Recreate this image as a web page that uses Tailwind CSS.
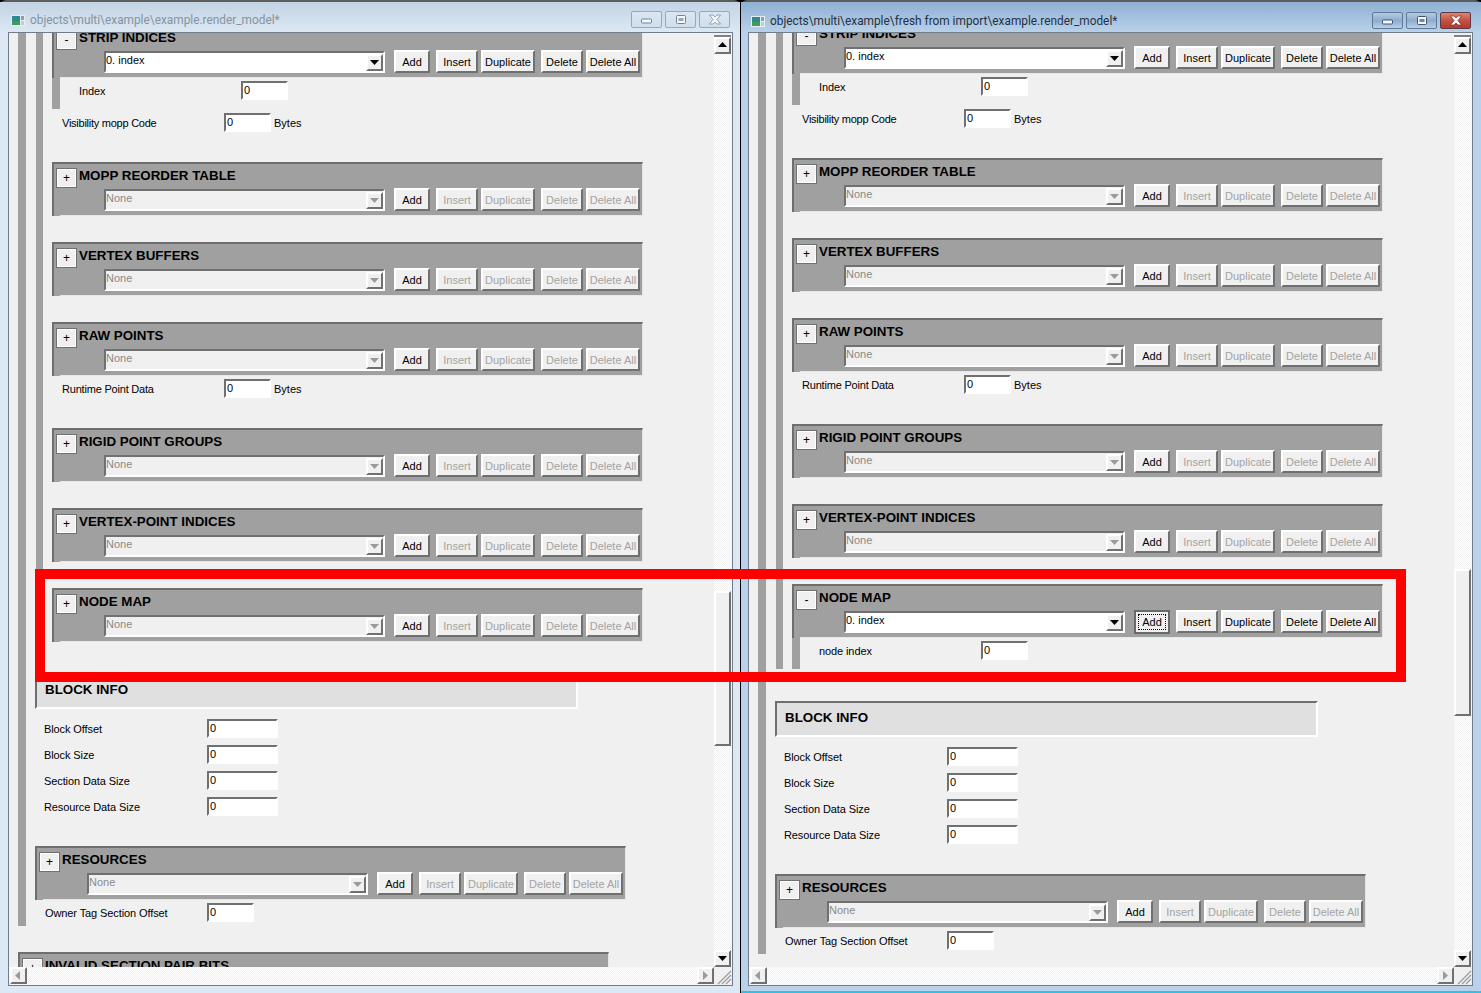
<!DOCTYPE html>
<html lang="en">
<head>
  <meta charset="UTF-8" />
  <title>render_model</title>
  <script src="https://cdn.jsdelivr.net/npm/@tailwindcss/browser@4"></script>
</head>
<body class="bg-black">
<div class="relative w-[1481px] h-[993px] overflow-hidden bg-black font-['Liberation_Sans',Arial,sans-serif] text-[11px] text-black">
  <div id="win-left" class="absolute left-0 top-0 w-[740px] h-[993px] flex flex-col rounded-t-[6px] border-t-2 border-[#5c5c5c] bg-[#dce8f3] pl-[8px] pr-[7px] pb-[7px]"></div>
  <div id="win-right" class="absolute left-[741px] top-0 w-[740px] h-[993px] flex flex-col rounded-t-[6px] border-t-2 border-b-2 border-t-[#5c5c5c] border-b-[#2cc3e6] bg-[#b9d1ea] pl-[7px] pr-[8px] pb-[5px]"></div>
  <div class="absolute left-[35px] top-[569px] w-[1371px] h-[113px] border-[10px] border-[#ff0000]"></div>
</div>

<script>
const raised = "border-2 border-t-white border-l-white border-b-[#707070] border-r-[#707070] bg-[#f0f0f0]";
const sunken = "border-2 border-t-[#707070] border-l-[#707070] border-b-white border-r-white";
const dither = "bg-[repeating-conic-gradient(#f0f0f0_0_25%,#ffffff_0_50%)] bg-size-[2px_2px]";

function tri(dir, color) {
  const pts = { up: "0,6 9,6 4.5,1", down: "0,2 9,2 4.5,7", left: "6,0 6,9 1,4.5", right: "2,0 2,9 7,4.5" };
  return `<svg width="9" height="9" viewBox="0 0 9 9"><polygon points="${pts[dir]}" fill="${color}"/></svg>`;
}

function btn(label, width, on, focus) {
  const color = on ? "text-black" : "text-[#a3a3a3]";
  if (focus) {
    return `<div class="${width} h-[24px] border-2 border-[#6a6a6a] bg-[#f0f0f0] p-[2px]"><div class="h-full border border-dotted border-black flex items-center justify-center">${label}</div></div>`;
  }
  return `<div class="${width} h-[23px] pt-px ${raised} ${color} flex items-center justify-center whitespace-nowrap">${label}</div>`;
}

function combo(text, on) {
  const look = on ? "bg-white text-black" : "bg-[#f0f0f0] text-[#8a8a8a]";
  return `<div class="w-[281px] h-[22px] mt-[1px] ml-[50px] ${sunken} ${look} flex justify-between">
    <span class="leading-[14px]">${text}</span>
    <div class="w-[17px] h-[17px] mt-px ${raised} flex items-center justify-center">${tri("down", on ? "#000000" : "#9a9a9a")}</div>
  </div>`;
}

// one collapsible block header: 591x54
function block(title, open, focus, margin) {
  const item = open ? "0. index" : "None";
  return `<div class="${margin || ""} w-[591px] h-[54px] flex flex-col border-t-2 border-l-2 border-r border-t-[#6e6e6e] border-l-[#6e6e6e] border-r-[#e6e6e6] bg-[#a0a0a0]">
    <div class="flex h-[24px] shrink-0">
      <div class="ml-[2px] mt-[4px] w-[21px] h-[20px] border border-[#707070] bg-[#f0f0f0] shadow-[inset_0_0_0_1px_white] flex items-center justify-center text-[12px] leading-none">${open ? "-" : "+"}</div>
      <span class="ml-[2px] text-[13.35px] font-bold leading-[24px] whitespace-nowrap">${title}</span>
    </div>
    <div class="flex h-[24px] shrink-0">
      ${combo(item, open)}
      <div class="flex ml-[9px]">
        ${btn("Add", "w-[36px]", true, focus)}
        <div class="w-[6px]"></div>${btn("Insert", "w-[42px]", open)}
        <div class="w-[3px]"></div>${btn("Duplicate", "w-[54px]", open)}
        <div class="w-[6px]"></div>${btn("Delete", "w-[42px]", open)}
        <div class="w-[3px]"></div>${btn("Delete All", "w-[54px]", open)}
      </div>
    </div>
    <div class="mt-auto ml-[6px] h-px bg-[#e8e8e8]"></div>
  </div>`;
}

function row(label, margin, labelWidth, inputWidth, unit, spacing) {
  return `<div class="flex h-[19px] items-center ${margin}">
    <span class="${labelWidth} ${spacing || "tracking-[-0.1px]"} pt-px shrink-0 whitespace-nowrap">${label}</span>
    <div class="${inputWidth} h-[19px] ${sunken} bg-white pl-px leading-[15px]">0</div>
    ${unit ? `<span class="ml-[3px] pt-px">${unit}</span>` : ""}
  </div>`;
}

// grey bar + one field under an opened block
function opened(label) {
  return `<div class="h-[31px] pt-[3px] border-l-8 border-[#a0a0a0]">${row(label, "ml-[19px]", "w-[162px]", "w-[47px]")}</div>`;
}

function vscroll(thumbGap, thumbHeight) {
  return `<div class="flex flex-col w-[18px] ${dither}">
    <div class="h-[4px] border-b-2 border-[#808080] bg-[#f0f0f0] mr-px"></div>
    <div class="h-[17px] w-[17px] ${raised} flex items-center justify-center">${tri("up", "#000000")}</div>
    <div class="${thumbGap}"></div>
    <div class="${thumbHeight} w-[17px] ${raised}"></div>
    <div class="flex-1"></div>
    <div class="h-[17px] w-[17px] ${raised} flex items-center justify-center">${tri("down", "#000000")}</div>
  </div>`;
}

function hscroll() {
  return `<div class="flex h-[18px] ${dither} pl-px">
    <div class="h-[17px] w-[17px] ${raised} flex items-center justify-center">${tri("left", "#9a9a9a")}</div>
    <div class="flex-1"></div>
    <div class="h-[17px] w-[17px] ${raised} flex items-center justify-center">${tri("right", "#9a9a9a")}</div>
  </div>`;
}

function grip() {
  return `<div class="h-[18px] w-[18px] bg-[#f0f0f0]"><svg width="18" height="18" viewBox="0 0 18 18"><path d="M4 17 17 4M8 17 17 8M12 17 17 12" stroke="#9a9a9a" stroke-width="1.2" fill="none"/></svg></div>`;
}

function captionButtons(active) {
  const base = active
    ? "border border-[#5f7896] bg-gradient-to-b from-[#b4cbe3] via-[#8eaccd] to-[#b6d1ec]"
    : "border border-[#93a9bf] bg-gradient-to-b from-[#dbe6f1] to-[#cfdeed]";
  const close = active
    ? "border border-[#5e3a48] bg-gradient-to-b from-[#dc8674] via-[#c5513f] to-[#b5392b]"
    : base;
  const ink = active ? "#3d5673" : "#6f8499";
  return `<div class="flex gap-[3px] h-[17px]">
    <div class="w-[31px] h-[17px] rounded-[2px] ${base} flex items-center justify-center">
      <svg width="13" height="9" viewBox="0 0 13 9"><rect x="1.5" y="4" width="10" height="4" rx="1" fill="#f4f8fc" stroke="${ink}"/></svg>
    </div>
    <div class="w-[31px] h-[17px] rounded-[2px] ${base} flex items-center justify-center">
      <svg width="12" height="11" viewBox="0 0 12 11"><rect x="1.5" y="1.5" width="9" height="8" rx="1" fill="#f4f8fc" stroke="${ink}"/><rect x="3.5" y="4" width="5" height="3" fill="${ink}" opacity=".7"/></svg>
    </div>
    <div class="w-[31px] h-[17px] rounded-[2px] ${close} flex items-center justify-center">
      <svg width="14" height="11" viewBox="0 0 14 11"><path d="M1.5 1 5 1 7 3 9 1 12.500 1 9 5.500 12.500 10 9 10 7 8 5 10 1.500 10 5 5.500Z" fill="#f4f8fc" stroke="${active ? "#7a2c22" : ink}" stroke-width=".7"/></svg>
    </div>
  </div>`;
}

function titleBar(path, active) {
  const bar = active
    ? "h-[30px] pt-[10px] -ml-[7px] -mr-[8px] pl-[10px] pr-[10px] bg-gradient-to-b from-[#8fb0d2] to-[#b9d1ea] text-[#26323f]"
    : "h-[30px] pt-[9px] -ml-[8px] -mr-[7px] pl-[11px] pr-[10px] bg-gradient-to-b from-[#c2d3e4] to-[#dce8f3] text-[#87929e]";
  return `<div class="flex justify-between shrink-0 ${bar}">
    <div class="flex items-center h-[17px] pt-[2px] gap-[5px] font-['Roboto',sans-serif] text-[11.85px] whitespace-nowrap">
      <svg width="14" height="11" viewBox="0 0 14 11"><rect width="14" height="11" fill="#e8eef2"/><rect x="1" y="1" width="8" height="9" fill="#2f8a8a"/><rect x="1" y="6" width="8" height="4" fill="#3f9a5e"/><rect x="10" y="1" width="3" height="4" fill="#8aa0b0"/><rect x="10" y="6" width="3" height="4" fill="#c4ccd2"/></svg>
      <span>${path}</span>
    </div>
    ${captionButtons(active)}
  </div>`;
}

function upperBlocks() {
  return `
      ${block("STRIP INDICES", true)}
      ${opened("Index")}
      <div class="mt-[4px]">${row("Visibility mopp Code", "ml-[10px]", "w-[162px]", "w-[47px]", "Bytes", "tracking-[-0.25px]")}</div>
      ${block("MOPP REORDER TABLE", false, false, "mt-[30px]")}
      ${block("VERTEX BUFFERS", false, false, "mt-[26px]")}
      ${block("RAW POINTS", false, false, "mt-[26px]")}
      <div class="mt-[3px]">${row("Runtime Point Data", "ml-[10px]", "w-[162px]", "w-[47px]", "Bytes", "tracking-[-0.2px]")}</div>
      ${block("RIGID POINT GROUPS", false, false, "mt-[30px]")}
      ${block("VERTEX-POINT INDICES", false, false, "mt-[26px]")}`;
}

function clientLeft() {
  return `
  <div class="ml-[9px] -mt-[9px] border-l-8 border-[#a0a0a0]">
    <div class="ml-[10px] pl-[9px] border-l-[7px] border-[#a0a0a0]">
      ${upperBlocks()}
      ${block("NODE MAP", false, false, "mt-[26px]")}
    </div>
    ${blockInfo("mt-[31px]")}
  </div>
  ${invalidBits()}`;
}

function clientRight() {
  return `
  <div class="ml-[9px] -mt-[13px] border-l-8 border-[#a0a0a0]">
    <div class="ml-[10px] pl-[9px] border-l-[7px] border-[#a0a0a0]">
      ${upperBlocks()}
      ${block("NODE MAP", true, true, "mt-[26px]")}
      ${opened("node index")}
    </div>
    ${blockInfo("mt-[32px]")}
  </div>
  ${invalidBits()}`;
}

function blockInfo(gap) {
  return `<div class="${gap} ml-[9px] w-[543px] h-[36px] border-t-2 border-l-2 border-r-2 border-b-2 border-t-[#6e6e6e] border-l-[#6e6e6e] border-r-white border-b-white bg-[#e0e0e0] pl-[8px] text-[13.35px] font-bold leading-[30px]">BLOCK INFO</div>
  <div class="mt-[10px] flex flex-col gap-[7px]">
    ${row("Block Offset", "ml-[18px]", "w-[163px]", "w-[71px]")}
    ${row("Block Size", "ml-[18px]", "w-[163px]", "w-[71px]")}
    ${row("Section Data Size", "ml-[18px]", "w-[163px]", "w-[71px]")}
    ${row("Resource Data Size", "ml-[18px]", "w-[163px]", "w-[71px]")}
  </div>
  ${block("RESOURCES", false, false, "mt-[30px] ml-[9px]")}
  <div class="pt-[3px] pb-[4px]">${row("Owner Tag Section Offset", "ml-[19px]", "w-[162px]", "w-[47px]")}</div>`;
}

function invalidBits() {
  return block("INVALID SECTION PAIR BITS", false, false, "mt-[26px] ml-[9px]");
}

function win(id, path, active, content, thumbGap, thumbHeight) {
  document.getElementById(id).innerHTML = `
    ${titleBar(path, active)}
    <div class="flex-1 border border-[#6f7c8a] grid grid-cols-[705px_18px] grid-rows-[934px_18px] bg-[#f0f0f0]">
      <div class="overflow-hidden bg-[#f0f0f0]">${content}</div>
      ${vscroll(thumbGap, thumbHeight)}
      ${hscroll()}
      ${grip()}
    </div>`;
}

win("win-left", "objects\\multi\\example\\example.render_model*", false, clientLeft(), "h-[537px]", "h-[155px]");
win("win-right", "objects\\multi\\example\\fresh from import\\example.render_model*", true, clientRight(), "h-[515px]", "h-[147px]");
</script>
</body>
</html>
